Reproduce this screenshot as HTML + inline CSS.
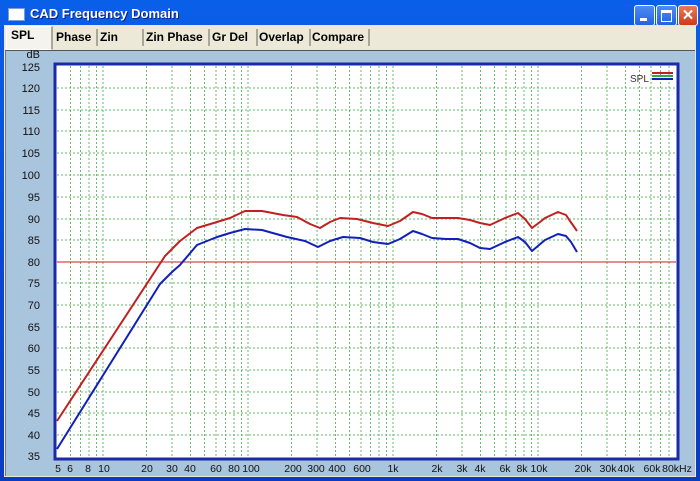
<!DOCTYPE html>
<html><head><meta charset="utf-8"><style>
body{margin:0;width:700px;height:481px;overflow:hidden;font-family:"Liberation Sans",Tahoma,sans-serif;background:#0a3fd0}
.win{position:absolute;left:0;top:0;width:700px;height:481px;background:linear-gradient(#0a5fe8,#0846d0 60%,#0a3cc0)}
.title{position:absolute;left:30px;top:6px;color:#fff;font-weight:bold;font-size:13px;text-shadow:1px 1px #0a1f80}
.ticon{position:absolute;left:8px;top:8px;width:15px;height:11px;background:#fff;border:1px solid #7a9ad8}
.btn{position:absolute;top:5px;width:19px;height:19px;border:1px solid #fff;border-radius:3px;background:linear-gradient(#4b8cf5,#2463e0)}
.client{position:absolute;left:4px;top:25px;width:692px;height:452px;background:#ece9d8}
.tab{position:absolute;top:4px;height:17px;font-size:12px;font-weight:bold;color:#000;padding-left:4px;border-right:2px solid #a9a79a;line-height:17px}
.panel{position:absolute;left:1px;top:25px;width:689px;height:425px;background:#a9c4dd;border-top:1px solid #555;border-left:1px solid #777}
</style></head><body><div class="win">
<div class="ticon"></div><div class="title">CAD Frequency Domain</div>
<div class="btn" style="left:634px"><div style="position:absolute;left:5px;top:12px;width:7px;height:3px;background:#fff"></div></div>
<div class="btn" style="left:656px"><div style="position:absolute;left:4px;top:4px;width:9px;height:8px;border:1px solid #fff;border-top-width:3px"></div></div>
<div class="btn" style="left:678px;width:18px;background:linear-gradient(#e87a5a,#cc3a18);color:#fff;font-weight:bold;font-size:15px;text-align:center;line-height:19px">✕</div>
<div class="client">
<div class="tab" style="left:2px;top:1px;width:40px;height:22px;background:#f4f3ee;border:1px solid #fff;border-right:2px solid #a9a79a">SPL</div>
<div class="tab" style="left:48px;width:40px">Phase</div>
<div class="tab" style="left:92px;width:42px">Zin</div>
<div class="tab" style="left:138px;width:62px">Zin Phase</div>
<div class="tab" style="left:204px;width:44px">Gr Del</div>
<div class="tab" style="left:251px;width:50px">Overlap</div>
<div class="tab" style="left:304px;width:56px">Compare</div>
<div class="panel"></div>
</div>
<svg style="position:absolute;left:0;top:0" width="700" height="481" font-family="Liberation Sans, sans-serif" font-size="11" fill="#111">
<rect x="55" y="64" width="623" height="395" fill="#fff" stroke="#1a2aa8" stroke-width="3"/>
<g stroke="#4cb04c" stroke-width="1" stroke-dasharray="2,2" opacity="0.85">
<path d="M57 88H676M57 110H676M57 131H676M57 153H676M57 175H676M57 197H676M57 219H676M57 240H676M57 283H676M57 305H676M57 327H676M57 348H676M57 370H676M57 392H676M57 413H676M57 435H676"/>
<path d="M70.5 66V456M80.5 66V456M89 66V456M96.5 66V456M103 66V456M146.5 66V456M172 66V456M190.5 66V456M204.5 66V456M216 66V456M225.5 66V456M234 66V456M241.5 66V456M248 66V456M291.5 66V456M317 66V456M335.5 66V456M349.5 66V456M361 66V456M370.5 66V456M379 66V456M386.5 66V456M393 66V456M436.5 66V456M462 66V456M480.5 66V456M494.5 66V456M506 66V456M515.5 66V456M524 66V456M531.5 66V456M538 66V456M581.5 66V456M607 66V456M625.5 66V456M639.5 66V456M651 66V456M660.5 66V456M669 66V456"/>
</g>
<path d="M57 262H676" stroke="#c02020" stroke-width="1"/>
<path d="M57 421L165 256L180 241L197 228L217 222L230 218L245 211L262 211L283 215L297 217L310 224L320 228L330 222L340 218L357 219L373 223L388 226L400 221L413 212L422 214L432 218L446 218L458 218L470 220L480 223L490 225L505 218L518 213L525 219L532 228L540 222L545 218L558 212L566 215L570 221L577 231" fill="none" stroke="#c02020" stroke-width="2" stroke-linejoin="round"/>
<path d="M57 449L160 284L172 272L180 265L197 245L217 237L230 233L245 229L262 230L287 237L305 241L318 247L330 241L343 237L360 238L373 242L388 244L400 239L413 231L422 234L432 238L446 239L458 239L470 243L480 248L490 249L505 242L518 237L525 242L532 251L545 240L558 234L566 236L571 242L577 252" fill="none" stroke="#1020b8" stroke-width="2" stroke-linejoin="round"/>
<text x="630" y="82" font-size="10" fill="#333">SPL</text>
<path d="M652 73H673" stroke="#c02020" stroke-width="2"/><path d="M652 76H673" stroke="#3a3" stroke-width="2"/><path d="M652 79H673" stroke="#1020b8" stroke-width="2"/>
<g text-anchor="end">
<text x="40" y="58">dB</text>
<text x="40" y="71">125</text><text x="40" y="92">120</text><text x="40" y="114">115</text><text x="40" y="135">110</text><text x="40" y="157">105</text><text x="40" y="179">100</text><text x="40" y="201">95</text><text x="40" y="223">90</text><text x="40" y="244">85</text><text x="40" y="266">80</text><text x="40" y="287">75</text><text x="40" y="309">70</text><text x="40" y="331">65</text><text x="40" y="352">60</text><text x="40" y="374">55</text><text x="40" y="396">50</text><text x="40" y="417">45</text><text x="40" y="439">40</text><text x="40" y="460">35</text>
</g>
<g text-anchor="middle" font-size="10.5">
<text x="58" y="472">5</text><text x="70" y="472">6</text><text x="88" y="472">8</text><text x="104" y="472">10</text><text x="147" y="472">20</text><text x="172" y="472">30</text><text x="190" y="472">40</text><text x="216" y="472">60</text><text x="234" y="472">80</text><text x="251" y="472">100</text><text x="293" y="472">200</text><text x="316" y="472">300</text><text x="337" y="472">400</text><text x="362" y="472">600</text><text x="393" y="472">1k</text><text x="437" y="472">2k</text><text x="462" y="472">3k</text><text x="480" y="472">4k</text><text x="505" y="472">6k</text><text x="522" y="472">8k</text><text x="539" y="472">10k</text><text x="583" y="472">20k</text><text x="608" y="472">30k</text><text x="626" y="472">40k</text><text x="652" y="472">60k</text><text x="677" y="472">80kHz</text>
</g>
</svg>
</div></body></html>
